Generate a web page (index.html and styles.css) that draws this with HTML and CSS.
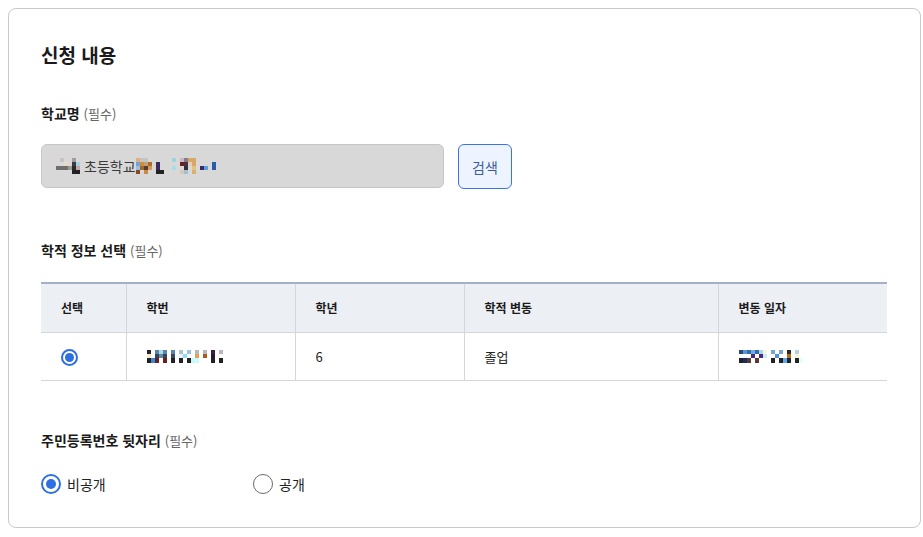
FILE: index.html
```html
<!DOCTYPE html>
<html lang="ko">
<head>
<meta charset="utf-8">
<link rel="stylesheet" href="styles.css">
</head>
<body>
<section class="card">
  <h2 class="title">신청 내용</h2>

  <div class="label">학교명 <span class="req">(필수)</span></div>
  <div class="school-row">
    <div class="school-input">
      <svg class="mosaic" width="28" height="16" viewBox="0 0 28 16">
        <rect x="4" y="0" width="4" height="4" fill="#cbc3c3"/>
        <rect x="16" y="0" width="4" height="4" fill="#a89a9a"/>
        <rect x="8" y="4" width="4" height="4" fill="#e4dcc4"/>
        <rect x="16" y="4" width="4" height="4" fill="#3a3a3a"/>
        <rect x="20" y="4" width="4" height="4" fill="#9fd3e0"/>
        <rect x="0" y="8" width="12" height="4" fill="#6e6e6e"/>
        <rect x="12" y="8" width="4" height="4" fill="#a09a96"/>
        <rect x="16" y="8" width="4" height="4" fill="#2a2a2a"/>
        <rect x="20" y="8" width="4" height="4" fill="#c8a4a4"/>
        <rect x="16" y="12" width="8" height="4" fill="#222"/>
      </svg><span>초등학교</span><svg class="mosaic" width="90" height="16" viewBox="0 0 90 16">
        <rect x="0" y="0" width="4" height="4" fill="#e1b07a"/>
        <rect x="4" y="0" width="8" height="4" fill="#c9c2c2"/>
        <rect x="0" y="4" width="4" height="4" fill="#6fa4d6"/>
        <rect x="4" y="4" width="4" height="4" fill="#d18b3e"/>
        <rect x="8" y="4" width="4" height="4" fill="#bfa27c"/>
        <rect x="12" y="4" width="4" height="4" fill="#b06c24"/>
        <rect x="0" y="8" width="4" height="4" fill="#9bc0e0"/>
        <rect x="4" y="8" width="4" height="4" fill="#a06a30"/>
        <rect x="8" y="8" width="4" height="4" fill="#5a3a2a"/>
        <rect x="12" y="8" width="4" height="4" fill="#d49a58"/>
        <rect x="0" y="12" width="4" height="4" fill="#8a4a20"/>
        <rect x="8" y="12" width="4" height="4" fill="#cc8a40"/>
        <rect x="20" y="4" width="4" height="8" fill="#3a2a5a"/>
        <rect x="20" y="12" width="8" height="4" fill="#222"/>
        <rect x="36" y="0" width="4" height="4" fill="#9fd3e0"/>
        <rect x="36" y="8" width="4" height="4" fill="#a8dce6"/>
        <rect x="44" y="0" width="4" height="4" fill="#c8b8c0"/>
        <rect x="48" y="0" width="4" height="4" fill="#8a7a8a"/>
        <rect x="52" y="0" width="8" height="4" fill="#d8a868"/>
        <rect x="44" y="4" width="4" height="4" fill="#6a2020"/>
        <rect x="48" y="4" width="4" height="4" fill="#4a3040"/>
        <rect x="52" y="4" width="4" height="4" fill="#e0d0c0"/>
        <rect x="56" y="4" width="4" height="4" fill="#d8a868"/>
        <rect x="48" y="8" width="4" height="4" fill="#333"/>
        <rect x="56" y="8" width="4" height="4" fill="#e6c080"/>
        <rect x="44" y="12" width="4" height="4" fill="#d8c8b0"/>
        <rect x="48" y="12" width="4" height="4" fill="#9cc0dc"/>
        <rect x="56" y="12" width="4" height="4" fill="#d8b070"/>
        <rect x="64" y="8" width="4" height="4" fill="#3a2a6a"/>
        <rect x="68" y="8" width="4" height="4" fill="#5b9ee0"/>
        <rect x="76" y="4" width="4" height="8" fill="#2a5aa8"/>
      </svg>
    </div>
    <button class="search-btn" type="button">검색</button>
  </div>

  <div class="label label-gap">학적 정보 선택 <span class="req">(필수)</span></div>
  <table class="grid">
    <colgroup>
      <col class="c-sel"><col class="c-num"><col class="c-grade"><col class="c-change"><col class="c-date">
    </colgroup>
    <thead>
      <tr><th>선택</th><th>학번</th><th>학년</th><th>학적 변동</th><th>변동 일자</th></tr>
    </thead>
    <tbody>
      <tr>
        <td><span class="radio small checked"></span></td>
        <td>
          <svg class="mosaic" width="78" height="13" viewBox="0 0 78 13">
            <rect x="0" y="0" width="4" height="4" fill="#2a2030"/>
            <rect x="8" y="0" width="4" height="4" fill="#5a84a8"/>
            <rect x="12" y="0" width="4" height="4" fill="#a8dcec"/>
            <rect x="16" y="0" width="4" height="4" fill="#5a84a8"/>
            <rect x="24" y="0" width="4" height="4" fill="#5a84a8"/>
            <rect x="32" y="0" width="4" height="4" fill="#a8c8d0"/>
            <rect x="40" y="0" width="4" height="4" fill="#98c4dc"/>
            <rect x="48" y="0" width="4" height="4" fill="#b8b8b8"/>
            <rect x="56" y="0" width="4" height="4" fill="#b8b8b8"/>
            <rect x="64" y="0" width="4" height="4" fill="#3a2040"/>
            <rect x="72" y="0" width="4" height="4" fill="#b8b8b8"/>
            <rect x="0" y="4" width="4" height="4" fill="#f4ecc8"/>
            <rect x="8" y="4" width="4" height="4" fill="#34465a"/>
            <rect x="12" y="4" width="4" height="4" fill="#6a8aa4"/>
            <rect x="16" y="4" width="4" height="4" fill="#34465a"/>
            <rect x="24" y="4" width="4" height="4" fill="#3a4a5a"/>
            <rect x="32" y="4" width="4" height="4" fill="#e8f4f8"/>
            <rect x="36" y="4" width="4" height="4" fill="#98dcf4"/>
            <rect x="48" y="4" width="4" height="4" fill="#e8a050"/>
            <rect x="56" y="4" width="4" height="4" fill="#b0581a"/>
            <rect x="64" y="4" width="4" height="4" fill="#2a1a30"/>
            <rect x="0" y="8" width="4" height="5" fill="#222"/>
            <rect x="4" y="8" width="4" height="5" fill="#3a88d8"/>
            <rect x="8" y="8" width="4" height="5" fill="#6a2020"/>
            <rect x="16" y="8" width="4" height="5" fill="#6a2020"/>
            <rect x="24" y="8" width="4" height="5" fill="#222"/>
            <rect x="32" y="8" width="4" height="5" fill="#222"/>
            <rect x="40" y="8" width="4" height="5" fill="#222"/>
            <rect x="44" y="8" width="8" height="5" fill="#c8fcfc"/>
            <rect x="64" y="8" width="4" height="5" fill="#222"/>
            <rect x="72" y="8" width="4" height="5" fill="#222"/>
          </svg>
        </td>
        <td>6</td>
        <td>졸업</td>
        <td>
          <svg class="mosaic" width="64" height="13" viewBox="0 0 64 13">
            <rect x="0" y="0" width="4" height="4" fill="#2a4a7a"/>
            <rect x="4" y="0" width="4" height="4" fill="#5a94d8"/>
            <rect x="8" y="0" width="4" height="4" fill="#3a6aa8"/>
            <rect x="12" y="0" width="4" height="4" fill="#6ab0e8"/>
            <rect x="16" y="0" width="4" height="4" fill="#3a6aa8"/>
            <rect x="20" y="0" width="4" height="4" fill="#a8d8f0"/>
            <rect x="24" y="0" width="4" height="4" fill="#f8f8d8"/>
            <rect x="32" y="0" width="4" height="4" fill="#78a8d0"/>
            <rect x="40" y="0" width="4" height="4" fill="#78a8d0"/>
            <rect x="48" y="0" width="4" height="4" fill="#2a2a20"/>
            <rect x="56" y="0" width="4" height="4" fill="#b8d0dc"/>
            <rect x="0" y="4" width="4" height="4" fill="#fff"/>
            <rect x="12" y="4" width="4" height="4" fill="#4a2a7a"/>
            <rect x="20" y="4" width="4" height="4" fill="#4a2a7a"/>
            <rect x="24" y="4" width="4" height="4" fill="#c8ecfc"/>
            <rect x="36" y="4" width="4" height="4" fill="#4a94e0"/>
            <rect x="48" y="4" width="4" height="4" fill="#b86a1a"/>
            <rect x="56" y="4" width="4" height="4" fill="#f8f4d8"/>
            <rect x="0" y="8" width="4" height="5" fill="#222"/>
            <rect x="4" y="8" width="4" height="5" fill="#1a2a6a"/>
            <rect x="8" y="8" width="4" height="5" fill="#5a3a2a"/>
            <rect x="16" y="8" width="4" height="5" fill="#5a3a2a"/>
            <rect x="32" y="8" width="4" height="5" fill="#222"/>
            <rect x="40" y="8" width="4" height="5" fill="#222"/>
            <rect x="44" y="8" width="4" height="5" fill="#5aaaf0"/>
            <rect x="48" y="8" width="4" height="5" fill="#222"/>
            <rect x="56" y="8" width="4" height="5" fill="#222"/>
            <rect x="60" y="8" width="4" height="5" fill="#e8fcfc"/>
          </svg>
        </td>
      </tr>
    </tbody>
  </table>

  <div class="label label-gap2">주민등록번호 뒷자리 <span class="req">(필수)</span></div>
  <div class="options">
    <label class="option"><span class="radio checked"></span><span>비공개</span></label>
    <label class="option"><span class="radio"></span><span>공개</span></label>
  </div>
</section>
</body>
</html>
```

FILE: styles.css
```css
* { box-sizing: border-box; }

html, body { overflow: hidden; }

body {
  margin: 0;
  font-family: "Noto Sans CJK KR", "Noto Sans", sans-serif;
  color: #222;
  background: #fff;
}

.card {
  margin: 8px;
  width: 913px;
  height: 520px;
  border: 1px solid #c9c9c9;
  border-radius: 8px;
  padding: 32px 32px 32px 32px;
}

.title {
  margin: 0 0 34px;
  height: 28px;
  font-size: 19px;
  line-height: 28px;
  font-weight: 700;
  color: #1a1a1a;
}

.label {
  height: 20px;
  font-size: 14px;
  line-height: 20px;
  font-weight: 700;
  color: #1a1a1a;
  white-space: nowrap;
}

.req {
  font-size: 13px;
  line-height: 1;
  font-weight: 400;
  color: #666;
}

.label-gap { margin-top: 51px; }
.label-gap2 { margin-top: 49px; }

.school-row {
  display: flex;
  gap: 14px;
  margin-top: 21px;
}

.school-input {
  width: 403px;
  height: 44px;
  background: #d8d8d8;
  border: 1px solid #c6c6c6;
  border-radius: 6px;
  display: flex;
  align-items: center;
  padding-left: 14px;
  font-size: 14px;
  color: #3a3a3a;
}

.school-input span { line-height: 16px; }

.mosaic { display: block; flex: none; }

.search-btn {
  width: 54px;
  height: 45px;
  border: 1px solid #3a74e2;
  border-radius: 6px;
  background: #eef4ff;
  color: #3a5c96;
  font-family: inherit;
  font-size: 14px;
  padding: 0;
}

.grid {
  margin-top: 22px;
  width: 846px;
  border-collapse: collapse;
  table-layout: fixed;
}

.c-sel { width: 85px; }
.c-num { width: 169px; }
.c-grade { width: 169px; }
.c-change { width: 254px; }
.c-date { width: 169px; }

.grid th {
  height: 49px;
  background: #eceff4;
  border-top: 2px solid #a2b1c8;
  border-bottom: 1px solid #d6d6d6;
  border-left: 1px solid #d6d6d6;
  text-align: left;
  padding: 0 0 0 20px;
  font-size: 12px;
  font-weight: 700;
  color: #1a1a1a;
}

.grid td {
  height: 48px;
  border-bottom: 1px solid #d6d6d6;
  border-left: 1px solid #d6d6d6;
  padding: 0 0 0 20px;
  font-size: 13px;
  color: #222;
  vertical-align: middle;
}

.grid th:first-child,
.grid td:first-child { border-left: none; }

.options {
  display: flex;
  margin-top: 24px;
}

.option {
  display: flex;
  align-items: center;
  gap: 6px;
  width: 212px;
  font-size: 14px;
  color: #222;
  line-height: 20px;
}

.radio {
  display: inline-block;
  width: 20px;
  height: 20px;
  border: 1.5px solid #6a6a6a;
  border-radius: 50%;
  background: #fff;
  position: relative;
  flex: none;
}

.radio.checked { border: 2px solid #2f6fe4; }

.radio.checked::after {
  content: "";
  position: absolute;
  left: 50%;
  top: 50%;
  width: 10px;
  height: 10px;
  margin: -5px 0 0 -5px;
  border-radius: 50%;
  background: #2f6fe4;
}

.radio.small {
  width: 17px;
  height: 17px;
  vertical-align: middle;
}

.radio.small.checked::after {
  width: 9px;
  height: 9px;
  margin: -4.5px 0 0 -4.5px;
}
```
